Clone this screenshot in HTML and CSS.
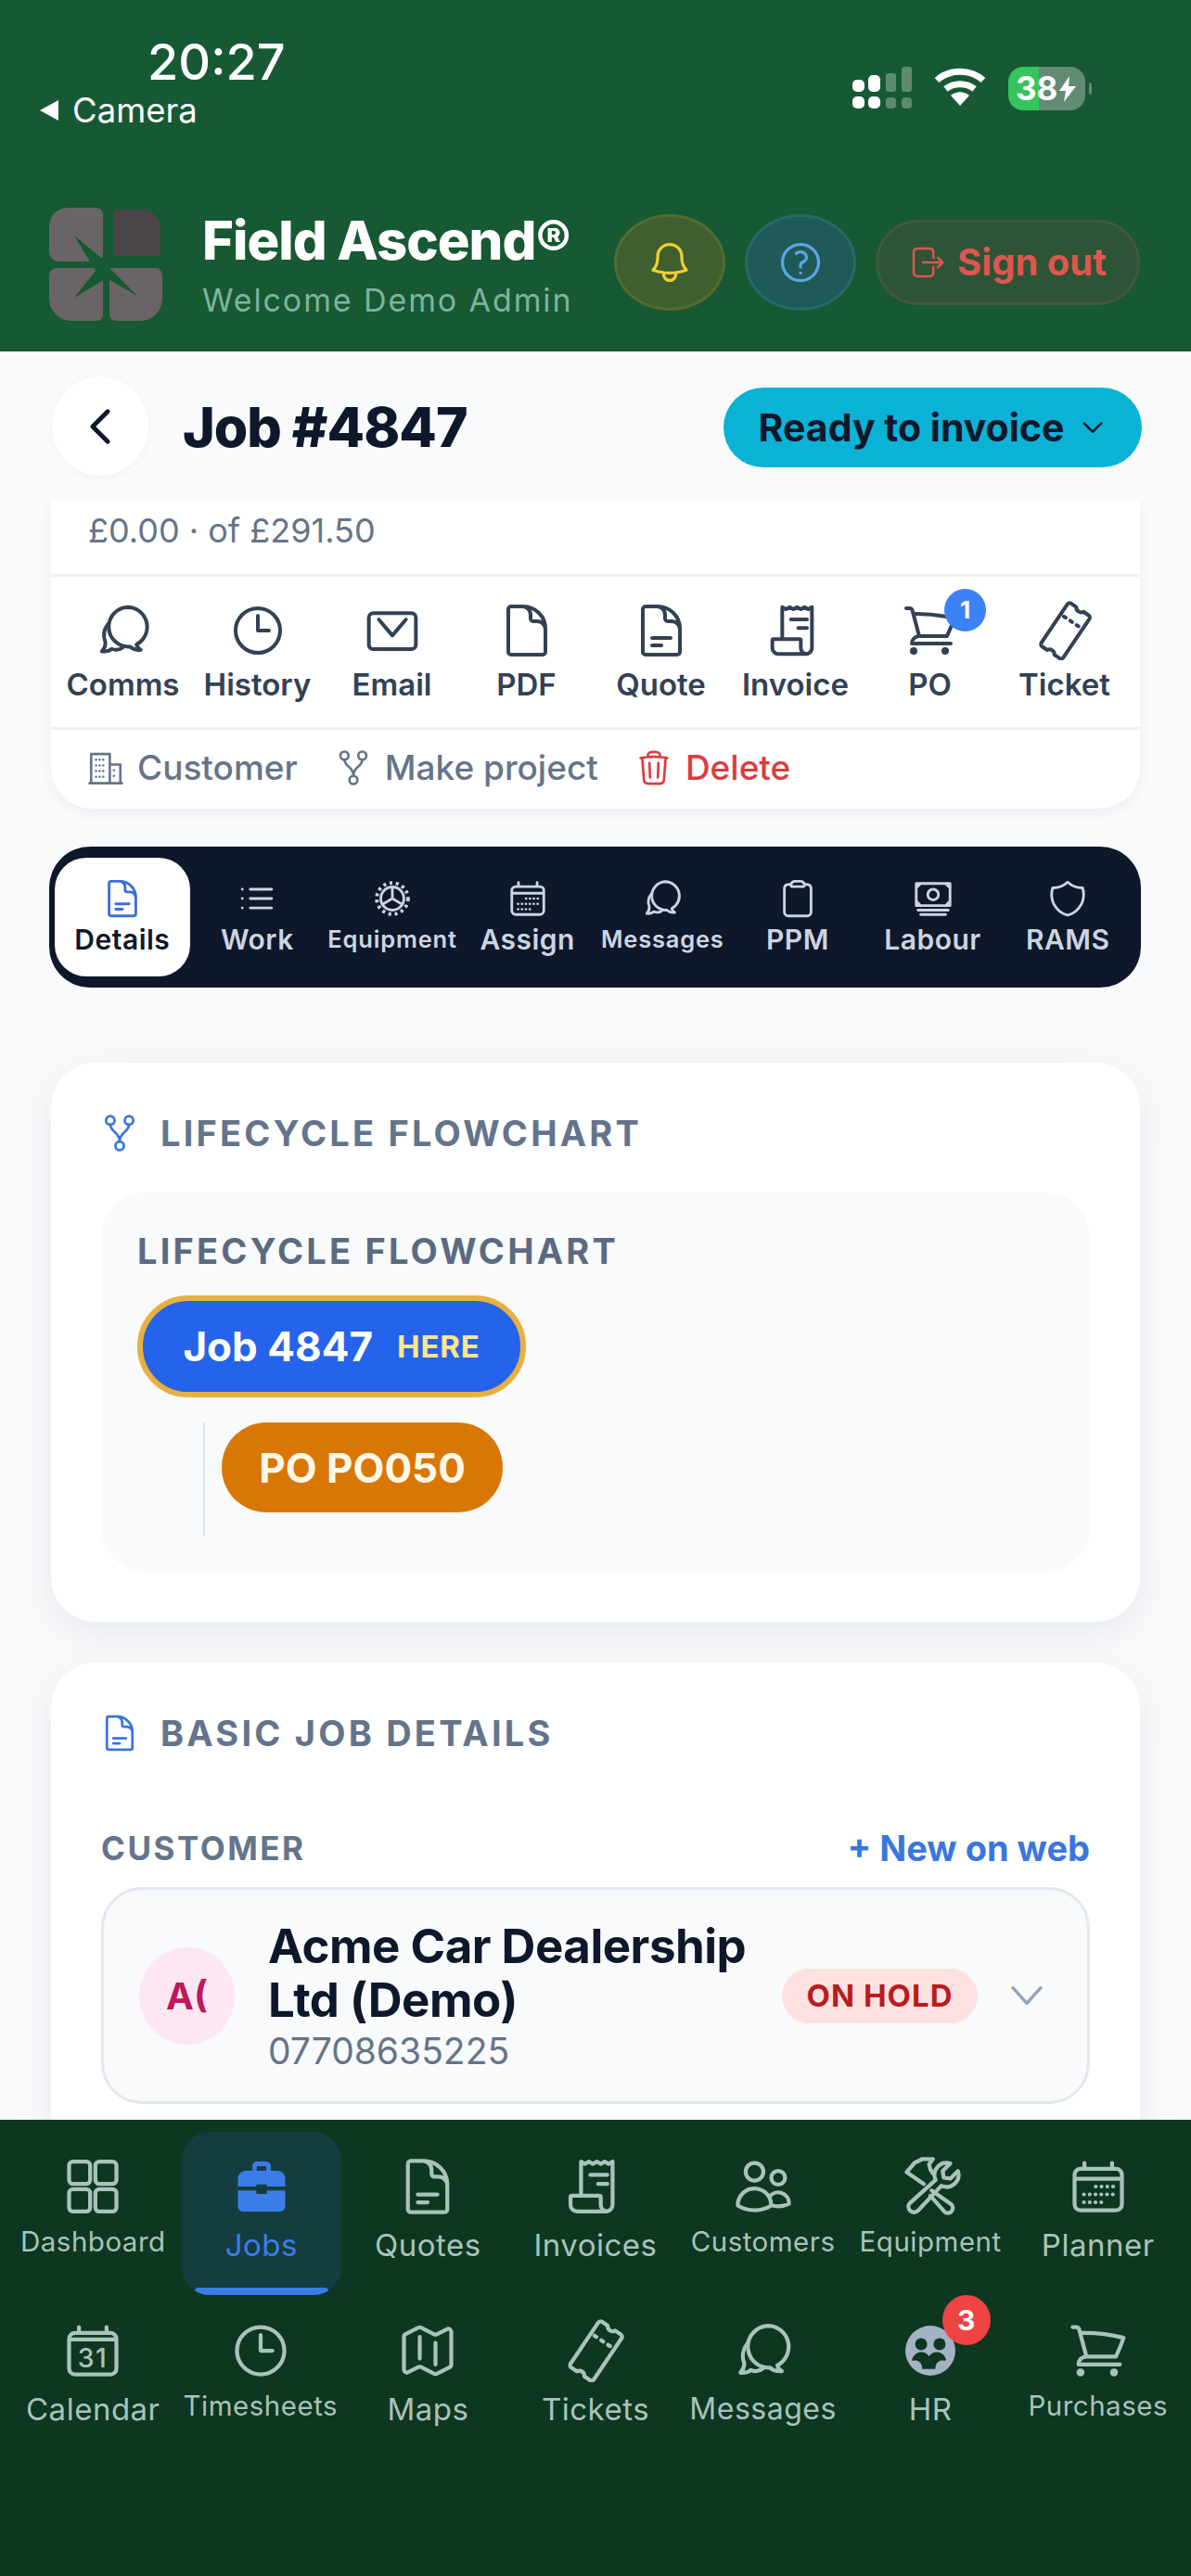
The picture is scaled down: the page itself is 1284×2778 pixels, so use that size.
FILE: index.html
```html
<!DOCTYPE html>
<html lang="en">
<head>
    <meta charset="UTF-8">
    <meta name="viewport" content="width=device-width, initial-scale=1.0">
    <title>Field Ascend - Job #4847</title>
    <link rel="stylesheet" href="styles.css">
</head>
<body>
    <svg class="sprite" xmlns="http://www.w3.org/2000/svg">
        <symbol id="i-chat" viewBox="0 0 24 24"><path d="M13.6 2.5a8 8 0 0 1 3.7 15.1c.2 1 .8 1.7 1.7 2.2-1.7.2-3.2-.2-4.4-1.3a8 8 0 0 1-1-16Z"/><path d="M5.9 9.3a7.4 7.4 0 0 0-1.2 7.4c.1 1.4-.4 2.6-1.4 3.7 1.5.2 2.9-.1 4-1 1.5.6 3.2.4 4.5-.6"/></symbol>
        <symbol id="i-clock" viewBox="0 0 24 24"><path d="M12 6v6h4.5m4.5 0a9 9 0 1 1-18 0 9 9 0 0 1 18 0Z"/></symbol>
        <symbol id="i-mail" viewBox="0 0 24 24"><rect x="2.5" y="5" width="19" height="14.5" rx="1.8"/><path d="m6.5 7.5 5.5 6.5 5.5-6.5"/></symbol>
        <symbol id="i-doc" viewBox="0 0 24 24"><path d="M19.5 14.25v-2.625a3.375 3.375 0 0 0-3.375-3.375h-1.5A1.125 1.125 0 0 1 13.5 7.125v-1.5a3.375 3.375 0 0 0-3.375-3.375H8.25m2.25 0H5.625c-.621 0-1.125.504-1.125 1.125v17.25c0 .621.504 1.125 1.125 1.125h12.75c.621 0 1.125-.504 1.125-1.125V11.25a9 9 0 0 0-9-9Z"/></symbol>
        <symbol id="i-doctext" viewBox="0 0 24 24"><path d="M19.5 14.25v-2.625a3.375 3.375 0 0 0-3.375-3.375h-1.5A1.125 1.125 0 0 1 13.5 7.125v-1.5a3.375 3.375 0 0 0-3.375-3.375H8.25m0 12.75h7.5m-7.5 3H12M10.5 2.25H5.625c-.621 0-1.125.504-1.125 1.125v17.25c0 .621.504 1.125 1.125 1.125h12.75c.621 0 1.125-.504 1.125-1.125V11.25a9 9 0 0 0-9-9Z"/></symbol>
        <symbol id="i-receipt" viewBox="0 0 24 24"><path d="M6.5 15V2.5l1.5.9 1.5-.9 1.5.9 1.5-.9 1.5.9 1.5-.9 1.5.9 1.5-.9v16.500a2.500 2.500 0 0 1-2.500 2.500H5a2.500 2.500 0 0 1-2.500-2.500v-3a.5.500 0 0 1 .5-.5h10.500a.5.500 0 0 1 .5.5v3a2.500 2.500 0 0 0 2.500 2.500M10 7.500h6.500M13 11h3.500"/></symbol>
        <symbol id="i-cart" viewBox="0 0 24 24"><path d="M2.250 3h1.386c.510 0 .955.343 1.087.835l.383 1.437M7.500 14.250a3 3 0 0 0-3 3h15.750m-12.750-3h11.218c1.121-2.300 2.100-4.684 2.924-7.138a60.114 60.114 0 0 0-16.536-1.840M7.500 14.250 5.106 5.272M6 20.250a.75.75 0 1 1-1.500 0 .75.75 0 0 1 1.500 0Zm12.750 0a.75.75 0 1 1-1.500 0 .75.75 0 0 1 1.500 0Z"/></symbol>
        <symbol id="i-ticket" viewBox="0 0 24 24"><g transform="rotate(-56 12 12)"><path d="M16.500 8.500v.9m0 2.200v.9m0 2.200v.9M1.500 8v2.500a2 2 0 0 1 0 3.500V16.500c0 .6.500 1.100 1.100 1.100h18.800c.6 0 1.100-.5 1.100-1.100V14a2 2 0 0 1 0-3.500V8c0-.6-.5-1.100-1.100-1.100H2.600C2 6.900 1.500 7.400 1.500 8Z"/></g></symbol>
        <symbol id="i-bell" viewBox="0 0 24 24"><path d="M14.857 17.082a23.848 23.848 0 0 0 5.454-1.31A8.967 8.967 0 0 1 18 9.750V9A6 6 0 0 0 6 9v.75a8.967 8.967 0 0 1-2.312 6.022c1.733.640 3.560 1.085 5.455 1.310m5.714 0a24.255 24.255 0 0 1-5.714 0m5.714 0a3 3 0 1 1-5.714 0"/></symbol>
        <symbol id="i-help" viewBox="0 0 24 24"><path d="M9.879 7.519c1.171-1.025 3.071-1.025 4.242 0 1.172 1.025 1.172 2.687 0 3.712-.203.179-.43.326-.67.442-.745.361-1.450.999-1.450 1.827v.75M21 12a9 9 0 1 1-18 0 9 9 0 0 1 18 0Zm-9 5.250h.008v.008H12v-.008Z"/></symbol>
        <symbol id="i-signout" viewBox="0 0 24 24"><path d="M15.750 9V5.250A2.250 2.250 0 0 0 13.500 3h-8.250A2.250 2.250 0 0 0 3 5.250v13.500A2.250 2.250 0 0 0 5.250 21h8.250a2.250 2.250 0 0 0 2.250-2.250V15m3 0 3-3m0 0-3-3m3 3H9"/></symbol>
        <symbol id="i-building" viewBox="0 0 24 24"><path d="M3 21.500V3.500h11.500v18M14.500 10H21v11.500M2 21.500h20"/><path class="dots" d="M6 7h6M6 10.500h6M6 14h6M6 17.500h6M17 13.500h2M17 17h2"/></symbol>
        <symbol id="i-fork" viewBox="0 0 24 24"><circle cx="6.500" cy="4.500" r="2.500"/><circle cx="17.500" cy="4.500" r="2.500"/><circle cx="12" cy="19.500" r="2.500"/><path d="M6.500 7c0 4.500 5.500 4 5.500 10M17.500 7c0 4.500-5.500 4-5.500 10"/></symbol>
        <symbol id="i-trash" viewBox="0 0 24 24"><path d="m14.740 9-.346 9m-4.788 0L9.260 9m9.968-3.210c.342.052.682.107 1.022.166m-1.022-.165L18.160 19.673a2.250 2.250 0 0 1-2.244 2.077H8.084a2.250 2.250 0 0 1-2.244-2.077L4.772 5.790m14.456 0a48.108 48.108 0 0 0-3.478-.397m-12 .562c.34-.059.68-.114 1.022-.165m0 0a48.110 48.110 0 0 1 3.478-.397m7.500 0v-.916c0-1.180-.91-2.164-2.090-2.201a51.964 51.964 0 0 0-3.320 0c-1.180.037-2.090 1.022-2.090 2.201v.916m7.500 0a48.667 48.667 0 0 0-7.500 0"/></symbol>
        <symbol id="i-list" viewBox="0 0 24 24"><path d="M8.250 6.750h12M8.250 12h12m-12 5.250h12M3.750 6.750h.007v.008H3.750V6.750ZM3.750 12h.007v.008H3.750V12Zm0 5.250h.007v.008H3.750v-.008Z"/></symbol>
        <symbol id="i-cog" viewBox="0 0 24 24"><circle cx="12" cy="12" r="6.500"/><circle class="teeth" cx="12" cy="12" r="8.800"/><path d="M12 12V5.500M12 12l5.600 3.300M12 12l-5.600 3.300"/></symbol>
        <symbol id="i-calendar" viewBox="0 0 24 24"><path d="M6.750 3v2.250M17.250 3v2.250M3 18.750V7.500a2.250 2.250 0 0 1 2.250-2.250h13.500A2.250 2.250 0 0 1 21 7.500v11.250A2.250 2.250 0 0 1 18.750 21H5.250A2.250 2.250 0 0 1 3 18.750ZM3 9h18"/><path class="dots" d="M11 12h7M6.500 15h11.500M6.500 18h7"/></symbol>
        <symbol id="i-clipboard" viewBox="0 0 24 24"><path d="M15.666 3.888A2.250 2.250 0 0 0 13.500 2.250h-3c-1.030 0-1.900.693-2.166 1.638m7.332 0c.055.194.084.4.084.612a.75.75 0 0 1-.75.75H9a.75.75 0 0 1-.75-.75c0-.212.03-.418.084-.612m7.332 0c.646.049 1.288.11 1.927.184 1.100.128 1.907 1.077 1.907 2.185V19.500a2.250 2.250 0 0 1-2.250 2.250H6.750A2.250 2.250 0 0 1 4.500 19.500V6.257c0-1.108.806-2.057 1.907-2.185a48.208 48.208 0 0 1 1.927-.184"/></symbol>
        <symbol id="i-money" viewBox="0 0 24 24"><path d="M2.500 3.500h19v12.500h-19zM5 3.500 2.500 6M19 3.500 21.500 6M5 16l-2.500-2.500M19 16l2.500-2.500M3.500 18.500h17M5 21h14"/><circle cx="12" cy="9.750" r="3"/></symbol>
        <symbol id="i-shield" viewBox="0 0 24 24"><path d="M12 2.714A11.959 11.959 0 0 1 3.598 6 11.990 11.990 0 0 0 3 9.749c0 5.592 3.824 10.290 9 11.623 5.176-1.332 9-6.030 9-11.622 0-1.310-.21-2.571-.598-3.751h-.152c-3.196 0-6.100-1.248-8.250-3.285Z"/></symbol>
        <symbol id="i-grid" viewBox="0 0 24 24"><rect x="3" y="2.500" width="8" height="8.500" rx="1.500"/><rect x="13" y="2.500" width="8" height="8.500" rx="1.500"/><rect x="3" y="13" width="8" height="8.500" rx="1.500"/><rect x="13" y="13" width="8" height="8.500" rx="1.500"/></symbol>
        <symbol id="i-users" viewBox="0 0 24 24"><path d="M15 19.128a9.380 9.380 0 0 0 2.625.372 9.337 9.337 0 0 0 4.121-.952 4.125 4.125 0 0 0-7.533-2.493M15 19.128v-.003c0-1.113-.285-2.160-.786-3.070M15 19.128v.106A12.318 12.318 0 0 1 8.624 21c-2.331 0-4.512-.645-6.374-1.766l-.001-.109a6.375 6.375 0 0 1 11.964-3.070M12 6.375a3.375 3.375 0 1 1-6.750 0 3.375 3.375 0 0 1 6.750 0Zm8.250 2.250a2.625 2.625 0 1 1-5.250 0 2.625 2.625 0 0 1 5.250 0Z"/></symbol>
        <symbol id="i-tools" viewBox="0 0 24 24"><path d="M14 9.500a4.600 4.600 0 0 1 5.600-6.300l-2.900 2.900.4 2.500 2.500.4 2.900-2.900a4.600 4.600 0 0 1-6.300 5.600L7.300 21.200a2.100 2.100 0 0 1-3-3Z"/><path d="M9.500 11 3 6.500l3-3.500 3-1.500h4l-1.500 2 .5 2 1 1.500M12.500 13.500l7.500 5.300a1.900 1.900 0 0 1-2.700 2.700L12 15.500"/></symbol>
        <symbol id="i-map" viewBox="0 0 24 24"><path d="M9 6.750V15m6-6v8.250m.503 3.498 4.875-2.437c.381-.19.622-.58.622-1.006V4.820c0-.836-.88-1.380-1.628-1.006l-3.869 1.934c-.317.159-.69.159-1.006 0L9.503 3.252a1.125 1.125 0 0 0-1.006 0L3.622 5.689C3.240 5.880 3 6.270 3 6.695V19.180c0 .836.88 1.380 1.628 1.006l3.869-1.934c.317-.159.69-.159 1.006 0l4.994 2.497c.317.158.69.158 1.006 0Z"/></symbol>
    </svg>

    <div class="app">
        <header class="top">
            <div class="status">
                <div class="status-left">
                    <div class="clock">20:27</div>
                    <div class="back-app">
                        <svg class="back-tri" viewBox="0 0 22 24"><path d="M21 1v22L1 12Z"/></svg>
                        Camera
                    </div>
                </div>
                <div class="status-right">
                    <svg class="signal" viewBox="0 0 64 46">
                        <rect x="0" y="14" width="13" height="13" rx="5"/>
                        <rect x="17" y="9" width="13" height="18" rx="5"/>
                        <rect x="0" y="32" width="13" height="13" rx="5"/>
                        <rect x="17" y="32" width="13" height="13" rx="5"/>
                        <g class="signal-off">
                            <rect x="36" y="7" width="11" height="20" rx="3"/>
                            <rect x="53" y="0" width="11" height="27" rx="3"/>
                            <rect x="36" y="33" width="11" height="12" rx="4"/>
                            <rect x="53" y="33" width="11" height="12" rx="4"/>
                        </g>
                    </svg>
                    <svg class="wifi" viewBox="0 0 56 42">
                        <path d="M3 13.500C17 1 39 1 53 13.500"/>
                        <path d="M12.500 23c8.500-7 22.500-7 31 0"/>
                        <path class="wifi-tip" d="M18 30c6-5 14-5 20 0L28 41Z"/>
                    </svg>
                    <div class="battery">38<svg class="bolt" viewBox="0 0 18 28"><path d="M11 0 0 16h7l-2 12 13-17h-8Z"/></svg></div>
                </div>
            </div>

            <div class="brand">
                <svg class="logo" viewBox="0 0 122 123">
                    <path class="petal" d="M20 0h30a8 8 0 0 1 8 8v50H10a10 10 0 0 1-10-10V20A20 20 0 0 1 20 0Z"/>
                    <path class="petal-dark" d="M70 2h30a20 20 0 0 1 20 20v30H70Z"/>
                    <path class="petal" d="M0 73a8 8 0 0 1 8-8h50v50a7 7 0 0 1-7 7H24A24 24 0 0 1 0 98Z"/>
                    <path class="petal" d="M65 65h49a8 8 0 0 1 8 8v25a24 24 0 0 1-24 24H72a7 7 0 0 1-7-7Z"/>
                    <path class="star" d="M27 30 56 54l12-4-2 16 29 29-33-19-35 21 23-29Z"/>
                </svg>
                <div class="brand-text">
                    <div class="brand-name">Field Ascend®</div>
                    <div class="brand-sub">Welcome Demo Admin</div>
                </div>
                <div class="top-actions">
                    <div class="round-btn bell"><svg class="ic"><use href="#i-bell"/></svg></div>
                    <div class="round-btn help"><svg class="ic"><use href="#i-help"/></svg></div>
                    <div class="signout"><svg class="ic"><use href="#i-signout"/></svg>Sign out</div>
                </div>
            </div>
        </header>

        <main class="page">
            <div class="job-bar">
                <div class="back-btn"><svg class="ic" viewBox="0 0 24 24"><path d="M15.750 19.500 8.250 12l7.500-7.500"/></svg></div>
                <h1 class="job-title">Job #4847</h1>
                <div class="status-pill">Ready to invoice <svg class="ic" viewBox="0 0 24 24"><path d="m4.500 8.250 7.500 7.500 7.500-7.500"/></svg></div>
            </div>

            <div class="scroll">
                <section class="summary">
                    <div class="summary-price">£0.00 · of £291.50</div>
                    <div class="actions">
                        <div class="action"><svg class="ic"><use href="#i-chat"/></svg>Comms</div>
                        <div class="action"><svg class="ic"><use href="#i-clock"/></svg>History</div>
                        <div class="action"><svg class="ic"><use href="#i-mail"/></svg>Email</div>
                        <div class="action"><svg class="ic"><use href="#i-doc"/></svg>PDF</div>
                        <div class="action"><svg class="ic"><use href="#i-doctext"/></svg>Quote</div>
                        <div class="action"><svg class="ic"><use href="#i-receipt"/></svg>Invoice</div>
                        <div class="action"><svg class="ic"><use href="#i-cart"/></svg><span class="po-badge">1</span>PO</div>
                        <div class="action"><svg class="ic"><use href="#i-ticket"/></svg>Ticket</div>
                    </div>
                    <div class="links">
                        <div class="link"><svg class="ic"><use href="#i-building"/></svg>Customer</div>
                        <div class="link"><svg class="ic"><use href="#i-fork"/></svg>Make project</div>
                        <div class="link danger"><svg class="ic"><use href="#i-trash"/></svg>Delete</div>
                    </div>
                </section>

                <nav class="tabs">
                    <div class="tab active"><svg class="ic"><use href="#i-doctext"/></svg>Details</div>
                    <div class="tab"><svg class="ic"><use href="#i-list"/></svg>Work</div>
                    <div class="tab tiny"><svg class="ic"><use href="#i-cog"/></svg>Equipment</div>
                    <div class="tab"><svg class="ic"><use href="#i-calendar"/></svg>Assign</div>
                    <div class="tab tiny"><svg class="ic"><use href="#i-chat"/></svg>Messages</div>
                    <div class="tab"><svg class="ic"><use href="#i-clipboard"/></svg>PPM</div>
                    <div class="tab"><svg class="ic"><use href="#i-money"/></svg>Labour</div>
                    <div class="tab"><svg class="ic"><use href="#i-shield"/></svg>RAMS</div>
                </nav>

                <section class="card flow-card">
                    <h2 class="card-head"><svg class="ic"><use href="#i-fork"/></svg>LIFECYCLE FLOWCHART</h2>
                    <div class="flow">
                        <h3 class="flow-title">LIFECYCLE FLOWCHART</h3>
                        <div class="node node-job">Job 4847 <span class="here">HERE</span></div>
                        <div class="flow-child">
                            <div class="node node-po">PO PO050</div>
                        </div>
                    </div>
                </section>

                <section class="card details-card">
                    <h2 class="card-head"><svg class="ic"><use href="#i-doctext"/></svg>BASIC JOB DETAILS</h2>
                    <div class="field-head">
                        <span class="field-label">CUSTOMER</span>
                        <span class="field-link">+ New on web</span>
                    </div>
                    <div class="customer">
                        <div class="avatar">A(</div>
                        <div class="customer-info">
                            <div class="customer-name">Acme Car Dealership Ltd (Demo)</div>
                            <div class="customer-phone">07708635225</div>
                        </div>
                        <span class="hold">ON HOLD</span>
                        <svg class="ic customer-chev" viewBox="0 0 24 24"><path d="m3 7 9 10 9-10"/></svg>
                    </div>
                </section>
            </div>
        </main>

        <footer class="bottom">
            <div class="nav-item small"><svg class="ic"><use href="#i-grid"/></svg>Dashboard</div>
            <div class="nav-item active">
                <svg class="nav-case" viewBox="0 0 24 24"><path d="M8.500 6V4.300c0-1 .8-1.800 1.800-1.800h3.400c1 0 1.800.8 1.800 1.800V6h-1.700V4.400c0-.1-.1-.2-.2-.2h-3.200c-.1 0-.2.1-.2.2V6Z"/><path d="M6 6h12c1.700 0 3 1.300 3 3v3H14v-.8h-4v.8H3V9c0-1.700 1.300-3 3-3ZM3 13.500h7v1.300h4v-1.300h7v6c0 1.100-.9 2-2 2H5c-1.100 0-2-.9-2-2Z"/></svg>
                Jobs
            </div>
            <div class="nav-item"><svg class="ic"><use href="#i-doctext"/></svg>Quotes</div>
            <div class="nav-item"><svg class="ic"><use href="#i-receipt"/></svg>Invoices</div>
            <div class="nav-item small"><svg class="ic"><use href="#i-users"/></svg>Customers</div>
            <div class="nav-item small"><svg class="ic"><use href="#i-tools"/></svg>Equipment</div>
            <div class="nav-item"><svg class="ic"><use href="#i-calendar"/></svg>Planner</div>
            <div class="nav-item">
                <svg class="ic" viewBox="0 0 24 24"><path d="M6.750 3v2.250M17.250 3v2.250M3 18.750V7.500a2.250 2.250 0 0 1 2.250-2.250h13.500A2.250 2.250 0 0 1 21 7.500v11.250A2.250 2.250 0 0 1 18.750 21H5.250A2.250 2.250 0 0 1 3 18.750ZM3 7.700h18"/><text class="cal-num" x="12" y="18.300">31</text></svg>
                Calendar
            </div>
            <div class="nav-item small"><svg class="ic"><use href="#i-clock"/></svg>Timesheets</div>
            <div class="nav-item"><svg class="ic"><use href="#i-map"/></svg>Maps</div>
            <div class="nav-item"><svg class="ic"><use href="#i-ticket"/></svg>Tickets</div>
            <div class="nav-item messages"><svg class="ic"><use href="#i-chat"/></svg>Messages</div>
            <div class="nav-item">
                <svg class="nav-hr" viewBox="0 0 24 24"><circle class="hr-bg" cx="12" cy="12" r="9.500"/><circle cx="8.500" cy="9.500" r="2.300"/><circle cx="15.500" cy="9.500" r="2.300"/><path d="M5 15.500c.5-2 2-3 3.500-3 1.200 0 2.200.5 3 1.600.8-1.100 1.800-1.600 3-1.600 1.500 0 3 1 3.500 3l-.6.400c-.3-.2-.8-.3-1.500-.1-1 .3-2 1.300-2 3.200h-5c0-1.900-1-2.900-2-3.200-.7-.2-1.200-.1-1.500.1Z"/></svg>
                <span class="hr-badge">3</span>
                HR
            </div>
            <div class="nav-item small"><svg class="ic"><use href="#i-cart"/></svg>Purchases</div>
        </footer>
    </div>
</body>
</html>
```

FILE: styles.css
```css
* {
    margin: 0;
    padding: 0;
    box-sizing: border-box;
}

body {
    font-family: Inter, "Liberation Sans", sans-serif;
    background: #f8fafc;
    color: #0f172a;
    overflow: hidden;
}

.sprite {
    display: none;
}

.ic {
    fill: none;
    stroke: currentColor;
    stroke-width: 1.5;
    stroke-linecap: round;
    stroke-linejoin: round;
    flex-shrink: 0;
}

.dots {
    stroke-dasharray: 0.1 2.1;
    stroke-width: 1.4;
}

.teeth {
    stroke-dasharray: 1.6 2;
    stroke-width: 2;
    stroke-linecap: butt;
}

.app {
    height: 2778px;
    display: flex;
    flex-direction: column;
}

/* top header */
.top {
    height: 379px;
    background: #165933;
    color: white;
    flex-shrink: 0;
}

.status {
    height: 220px;
    display: flex;
    justify-content: space-between;
    padding: 40px 114px 0 42px;
}

.clock {
    font-size: 54px;
    font-weight: 500;
    line-height: 54px;
    padding-left: 117px;
}

.back-app {
    display: flex;
    align-items: center;
    gap: 14px;
    font-size: 36.5px;
    line-height: 44px;
    margin-top: 3px;
}

.back-tri {
    width: 22px;
    height: 24px;
    fill: white;
}

.status-right {
    display: flex;
    align-items: flex-start;
    padding-top: 32px;
}

.signal {
    width: 64px;
    height: 46px;
    fill: white;
}

.signal-off {
    fill: rgba(255, 255, 255, 0.3);
}

.wifi {
    width: 56px;
    height: 42px;
    margin: 1px 24px 0;
    fill: none;
    stroke: white;
    stroke-width: 7;
}

.wifi-tip {
    fill: white;
    stroke: none;
}

.battery {
    position: relative;
    width: 83px;
    height: 47px;
    border-radius: 16px;
    background: linear-gradient(90deg, #36c45c 0 40%, #628a74 40% 100%);
    font-size: 35px;
    font-weight: 700;
    line-height: 47px;
    padding-left: 8px;
    display: flex;
    align-items: center;
    gap: 2px;
}

.battery::after {
    content: "";
    position: absolute;
    right: -7px;
    top: 17px;
    width: 3px;
    height: 13px;
    border-radius: 0 3px 3px 0;
    background: #628a74;
}

.bolt {
    width: 18px;
    height: 28px;
    fill: white;
}

.brand {
    display: flex;
    align-items: center;
    height: 124px;
    padding: 0 55px 0 53px;
    margin-top: 3px;
}

.logo {
    width: 122px;
    height: 123px;
    margin-right: 43px;
    flex-shrink: 0;
}

.petal {
    fill: #6b6466;
}

.petal-dark {
    fill: #4a4548;
}

.star {
    fill: #165933;
}

.brand-name {
    font-size: 58px;
    font-weight: 800;
    letter-spacing: -1px;
    line-height: 68px;
    white-space: nowrap;
}

.brand-sub {
    font-size: 34px;
    line-height: 44px;
    letter-spacing: 1.9px;
    color: #7fb39e;
    margin-top: 9px;
    white-space: nowrap;
}

.top-actions {
    margin-left: auto;
    display: flex;
    align-items: center;
    gap: 21px;
    margin-top: -5px;
}

.round-btn {
    width: 120px;
    height: 104px;
    border-radius: 50%;
    display: flex;
    align-items: center;
    justify-content: center;
    border: 3px solid;
}

.round-btn .ic {
    width: 52px;
    height: 52px;
}

.bell {
    background: #3f5f30;
    border-color: #556b30;
    color: #f2cf2c;
}

.help {
    background: #1f5a58;
    border-color: #276a68;
    color: #5aa7e6;
}

.signout {
    width: 285px;
    height: 92px;
    border-radius: 46px;
    background: #2d5436;
    border: 3px solid #43583a;
    color: #df5650;
    font-size: 40px;
    font-weight: 700;
    display: flex;
    align-items: center;
    justify-content: center;
    gap: 12px;
}

.signout .ic {
    width: 40px;
    height: 40px;
}

/* page */
.page {
    flex: 1;
    min-height: 0;
    display: flex;
    flex-direction: column;
}

.job-bar {
    height: 161px;
    flex-shrink: 0;
    display: flex;
    align-items: center;
    padding: 0 53px 0 56px;
}

.back-btn {
    width: 104px;
    height: 107px;
    border-radius: 50%;
    background: white;
    display: flex;
    align-items: center;
    justify-content: center;
    box-shadow: 0 2px 8px rgba(15, 23, 42, 0.04);
}

.back-btn .ic {
    width: 52px;
    height: 52px;
    stroke-width: 2.2;
}

.job-title {
    font-size: 59px;
    font-weight: 800;
    letter-spacing: -1px;
    margin-left: 37px;
    margin-top: 2px;
}

.status-pill {
    margin-left: auto;
    margin-top: 2px;
    width: 451px;
    height: 86px;
    border-radius: 43px;
    background: #0ab3d6;
    font-size: 41px;
    font-weight: 700;
    display: flex;
    align-items: center;
    justify-content: center;
    gap: 16px;
}

.status-pill .ic {
    width: 30px;
    height: 30px;
    stroke-width: 2;
}

.scroll {
    flex: 1;
    min-height: 0;
    overflow: hidden;
}

.summary {
    margin: 0 55px;
    background: white;
    border-radius: 0 0 44px 44px;
    box-shadow: 0 4px 16px rgba(15, 23, 42, 0.05);
}

.summary-price {
    height: 79px;
    padding: 10px 0 0 40px;
    font-size: 36px;
    line-height: 44px;
    color: #667488;
}

.actions {
    display: grid;
    grid-template-columns: repeat(8, 145px);
    padding: 26px 0 26px 5px;
    border-top: 3px solid #eef1f5;
    border-bottom: 3px solid #eef1f5;
}

.action {
    position: relative;
    display: flex;
    flex-direction: column;
    align-items: center;
    font-size: 33px;
    font-weight: 600;
    line-height: 40px;
    color: #334155;
}

.action .ic {
    width: 64px;
    height: 64px;
    margin-bottom: 6px;
}

.po-badge {
    position: absolute;
    top: -13px;
    left: 88px;
    width: 45px;
    height: 46px;
    border-radius: 50%;
    background: #3b82f6;
    color: white;
    font-size: 26px;
    font-weight: 700;
    line-height: 46px;
    text-align: center;
}

.links {
    display: flex;
    align-items: center;
    height: 85px;
    padding: 0 0 4px 38px;
    gap: 39px;
    font-size: 37px;
    font-weight: 500;
    color: #667488;
}

.link {
    display: flex;
    align-items: center;
    gap: 13px;
}

.link .ic {
    width: 42px;
    height: 42px;
}

.link.danger {
    color: #dc3b3f;
}

/* dark tab strip */
.tabs {
    margin: 41px 54px 0 53px;
    height: 152px;
    padding: 12px 6px;
    border-radius: 44px;
    background: #0f172a;
    display: grid;
    grid-template-columns: repeat(8, 1fr);
}

.tab {
    display: flex;
    flex-direction: column;
    align-items: center;
    padding-top: 21px;
    color: #cbd5e1;
    font-size: 30px;
    font-weight: 600;
    line-height: 36px;
    letter-spacing: 0.5px;
}

.tab .ic {
    width: 46px;
    height: 46px;
    margin-bottom: 3px;
}

.tab.tiny {
    font-size: 25.500px;
    letter-spacing: 0.8px;
}

.tab.active {
    background: white;
    color: #0f172a;
    border-radius: 34px;
}

.tab.active .ic {
    color: #3b6fd8;
}

.card {
    margin: 0 55px;
    background: white;
    border-radius: 48px;
    box-shadow: 0 10px 40px rgba(15, 23, 42, 0.07);
    padding: 54px;
}

.flow-card {
    margin-top: 81px;
}

.details-card {
    margin-top: 44px;
    height: 700px;
}

.card-head {
    display: flex;
    align-items: center;
    gap: 22px;
    height: 44px;
    font-size: 38px;
    font-weight: 700;
    letter-spacing: 3.2px;
    color: #64748b;
    padding-left: 1px;
}

.card-head .ic {
    width: 44px;
    height: 44px;
    color: #3b76d8;
    margin-left: -3px;
}

.flow {
    margin-top: 42px;
    padding: 43px 39px 38px;
    border-radius: 48px;
    background: #f8fafc;
}

.flow-title {
    font-size: 38px;
    font-weight: 700;
    letter-spacing: 3.200px;
    line-height: 40px;
    color: #5b6a80;
    margin-bottom: 28px;
}

.node {
    display: flex;
    align-items: center;
    justify-content: center;
    color: white;
    font-size: 44px;
    font-weight: 700;
}

.node-job {
    width: 419px;
    height: 110px;
    border-radius: 55px;
    background: #2563eb;
    border: 6px solid #e8b040;
    gap: 26px;
}

.here {
    font-size: 33px;
    color: #fde68a;
    letter-spacing: 0.8px;
}

.flow-child {
    margin: 27px 0 0 71px;
    padding: 0 0 26px 18px;
    border-left: 2px solid #dfe4ea;
}

.node-po {
    width: 303px;
    height: 97px;
    border-radius: 48px;
    background: #d97706;
    color: #fff8e6;
}

.field-head {
    display: flex;
    justify-content: space-between;
    align-items: center;
    height: 44px;
    margin-top: 80px;
}

.field-label {
    font-size: 35px;
    font-weight: 700;
    letter-spacing: 2.500px;
    color: #64748b;
}

.field-link {
    font-size: 38px;
    font-weight: 700;
    color: #3b76e0;
}

.customer {
    margin-top: 20px;
    height: 234px;
    border: 3px solid #e2e8f0;
    border-radius: 44px;
    background: #f8fafc;
    display: flex;
    align-items: center;
    padding: 0 45px 0 38px;
}

.avatar {
    width: 103px;
    height: 105px;
    flex-shrink: 0;
    border-radius: 50%;
    background: #fce7f3;
    color: #be185d;
    font-size: 40px;
    font-weight: 700;
    display: flex;
    align-items: center;
    justify-content: center;
}

.customer-info {
    flex: 1;
    margin-left: 36px;
    min-width: 0;
}

.customer-name {
    font-size: 51px;
    font-weight: 700;
    line-height: 58px;
    letter-spacing: -0.5px;
    padding-right: 20px;
}

.customer-phone {
    font-size: 39px;
    line-height: 46px;
    margin-top: 3px;
    color: #667488;
}

.hold {
    width: 211px;
    height: 59px;
    flex-shrink: 0;
    border-radius: 30px;
    background: #fee2e2;
    color: #b91c1c;
    font-size: 33px;
    font-weight: 700;
    letter-spacing: 1px;
    line-height: 59px;
    text-align: center;
}

.customer-chev {
    width: 40px;
    height: 40px;
    margin-left: 33px;
    color: #94a3b8;
    stroke-width: 2;
}

/* bottom nav */
.bottom {
    height: 492px;
    flex-shrink: 0;
    background: #0d3720;
    display: grid;
    grid-template-columns: repeat(7, 1fr);
    grid-auto-rows: 176px;
    gap: 1px 0;
    padding: 13px 10px 0;
}

.nav-item {
    position: relative;
    display: flex;
    flex-direction: column;
    align-items: center;
    padding-top: 25px;
    color: #a9c3bb;
    font-size: 33px;
    line-height: 40px;
    letter-spacing: 0.5px;
    white-space: nowrap;
}

.nav-item .ic,
.nav-case,
.nav-hr {
    width: 68px;
    height: 68px;
    margin-bottom: 9px;
}

.nav-item.small {
    font-size: 29.500px;
}

.nav-item.messages {
    font-size: 32px;
}

.nav-item.small .ic {
    margin-bottom: 5px;
}

.nav-item.active {
    margin: 0 3px 0 5px;
    background: #143d3f;
    border-radius: 30px;
    color: #3b7de8;
    overflow: hidden;
}

.nav-item.active::after {
    content: "";
    position: absolute;
    left: 14px;
    right: 14px;
    bottom: 0;
    height: 8px;
    background: #3b7de8;
    border-radius: 4px 4px 0 0;
}

.nav-case {
    fill: #3b7de8;
}

.nav-hr {
    fill: #0d3720;
}

.hr-bg {
    fill: #a4b3c4;
}

.cal-num {
    fill: currentColor;
    stroke: none;
    font-family: Inter, sans-serif;
    font-size: 10px;
    font-weight: 500;
    text-anchor: middle;
}

.hr-badge {
    position: absolute;
    top: -1px;
    left: 103px;
    width: 52px;
    height: 54px;
    border-radius: 50%;
    background: #ef4444;
    color: white;
    font-size: 30px;
    font-weight: 700;
    line-height: 54px;
    text-align: center;
}
```
